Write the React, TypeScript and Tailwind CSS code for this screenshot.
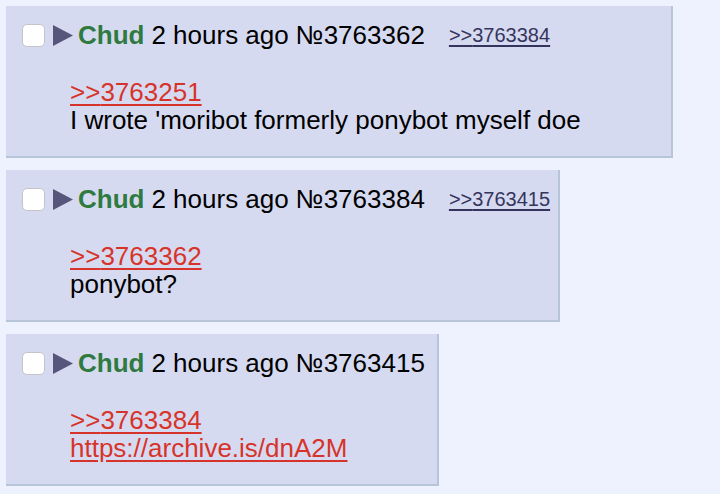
import React from 'react';

type Post = {
  id: number;
  backlink?: number;
  quote: number;
  lines: { text: string; link?: boolean }[];
};

const posts: Post[] = [
  {
    id: 3763362,
    backlink: 3763384,
    quote: 3763251,
    lines: [{ text: "I wrote 'moribot formerly ponybot myself doe" }],
  },
  {
    id: 3763384,
    backlink: 3763415,
    quote: 3763362,
    lines: [{ text: 'ponybot?' }],
  },
  {
    id: 3763415,
    quote: 3763384,
    lines: [{ text: 'https://archive.is/dnA2M', link: true }],
  },
];

const Reply = ({ post }: { post: Post }) => (
  <div className="w-fit bg-[#d6daf0] border-r-2 border-b-2 border-[#b7c5d9] pl-4 pr-2 pt-[15px] pb-[22px]">
    <div className="flex items-center h-[28px] whitespace-nowrap">
      <span className="w-[23px] h-[23px] rounded-[5px] border border-[#c4c4c8] bg-white" />
      <svg width="20" height="21" viewBox="0 0 20 21" className="ml-[8px]">
        <polygon points="0,0 20,10.5 0,21" fill="#56567c" />
      </svg>
      <span className="ml-[5px] font-bold text-[#2f7a3f]">Chud</span>
      <span className="ml-[7px]">2 hours ago</span>
      <span className="ml-[7px]">№{post.id}</span>
      {post.backlink && (
        <a className="ml-[24px] text-[20px] text-[#34345c] underline underline-offset-[3px]">
          &gt;&gt;{post.backlink}
        </a>
      )}
    </div>
    <div className="mt-[29px] ml-[48px] mr-[82px] leading-[28px]">
      <a className="block w-fit text-[#d6342a] underline underline-offset-[3px]">&gt;&gt;{post.quote}</a>
      {post.lines.map((l) =>
        l.link ? (
          <a key={l.text} className="block w-fit text-[#d6342a] underline underline-offset-[3px]">
            {l.text}
          </a>
        ) : (
          <div key={l.text}>{l.text}</div>
        ),
      )}
    </div>
  </div>
);

export default function App() {
  return (
    <div
      className="min-h-screen bg-[#eef2ff] pl-[6px] pt-[6px] text-[26px] leading-[28px] text-black flex flex-col gap-[12px]"
      style={{ fontFamily: '"Liberation Sans", Arial, sans-serif' }}
    >
      {posts.map((p) => (
        <Reply key={p.id} post={p} />
      ))}
    </div>
  );
}
